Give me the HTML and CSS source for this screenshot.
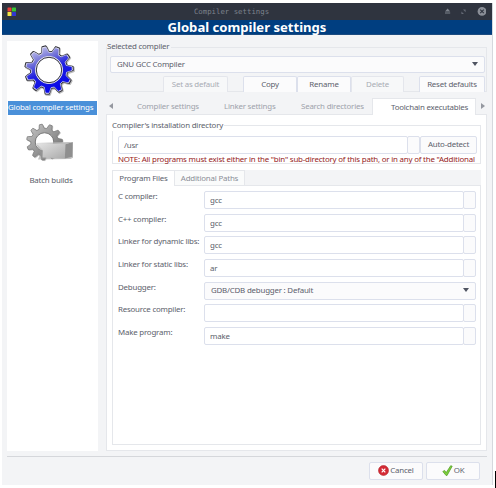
FILE: index.html
```html
<!DOCTYPE html>
<html lang="en">
<head>
<meta charset="utf-8">
<title>Compiler settings</title>
<link rel="stylesheet" href="styles.css">
</head>
<body>
<div class="window">
  <header class="titlebar">
    <svg class="app-icon" width="10" height="10" viewBox="0 0 10 10"><rect x=".5" y=".5" width="4" height="4" rx=".6" fill="#e8403a"/><rect x="5" y=".5" width="4" height="4" rx=".6" fill="#35c534"/><rect x=".5" y="5" width="4" height="4" rx=".6" fill="#f2e545"/><rect x="5" y="5" width="4" height="4" rx=".6" fill="#3236d0"/></svg>
    <span class="caption">Compiler settings</span>
    <svg class="controls" width="44" height="12" viewBox="0 0 44 12"><path d="M3 5.6 5.6 2.6 8.2 5.6ZM3 6.4h5.2v1.2H3Z" fill="#7f848e"/><path d="M21 3.6h2.6v2.6ZM19.4 5.4V8H22Z" fill="#666b76"/><circle cx="40" cy="5.4" r="4.4" fill="#8a8e97"/><path d="m38.2 3.6 3.6 3.6m0-3.6-3.6 3.6" stroke="#2f343f" stroke-width="1.1"/></svg>
  </header>
  <h1 class="banner">Global compiler settings</h1>
  <div class="body">
    <nav class="sidebar">
      <svg class="gear" width="56" height="56" viewBox="-28 -28 56 56">
        <defs>
          <linearGradient id="blue" x1="0" y1="0" x2=".45" y2="1"><stop offset="0" stop-color="#e2e2f4"/><stop offset=".35" stop-color="#7777d8"/><stop offset=".6" stop-color="#2020e0"/><stop offset="1" stop-color="#0808e8"/></linearGradient>
          <linearGradient id="gray" x1="0" y1="0" x2="1" y2="1"><stop offset="0" stop-color="#c9c9c9"/><stop offset="1" stop-color="#666"/></linearGradient>
          <linearGradient id="box" x1="0" y1="0" x2="1" y2="1"><stop offset="0" stop-color="#e6e6e6"/><stop offset="1" stop-color="#aaa"/></linearGradient>
        </defs>
        <path data-gear transform="translate(.8 .9)" fill="#aaa" stroke="#888" stroke-width="1.5" opacity=".55"/>
        <path data-gear fill="#dcdce4" stroke="#34343e" stroke-width="1.1"/>
        <path data-gear transform="scale(.955)" fill="url(#blue)" stroke="#e8e8f4" stroke-width=".6"/>
        <circle r="13.6" fill="#fff" stroke="#dedee8" stroke-width="1"/>
        <circle r="12.7" fill="#fff" stroke="#303040" stroke-width="1"/>
      </svg>
      <div class="nav-label selected">Global compiler settings</div>
      <svg class="batch" width="56" height="48" viewBox="0 0 56 48">
        <g transform="translate(22.5 22) scale(.74)">
          <path data-gear transform="translate(.8 .9)" fill="#ccc" stroke="#bbb"/>
          <path data-gear fill="url(#gray)" stroke="#777" stroke-width="1"/>
          <circle r="12.5" fill="#fff" stroke="#777" stroke-width="1.3"/>
        </g>
        <path d="M14.5 24.5 51 22.5v15.2L48.5 39 16 39.6 18.5 33Z" fill="#999" opacity=".6"/>
        <path d="M14 23 43.5 24.3 42.8 38.5 20.5 37.6 20.8 30Z" fill="url(#box)"/>
        <path d="m43.5 24.3 7.2-2.3-.4 14.8-7.5 1.7Z" fill="#8f8f8f"/>
        <path d="m14 23 36.7-1-7.2 2.3Z" fill="#bdbdbd"/>
      </svg>
      <div class="nav-label">Batch builds</div>
    </nav>
    <main class="main">
      <section class="group compiler">
        <div class="legend">Selected compiler</div>
        <div class="combo">GNU GCC Compiler<i class="arrow"></i></div>
        <div class="buttons">
          <span class="btn default off">Set as default</span><span class="btn copy">Copy</span><span class="btn rename">Rename</span><span class="btn delete off">Delete</span><span class="btn reset">Reset defaults</span>
        </div>
      </section>
      <div class="tabs">
        <i class="scroll left"></i>
        <span class="tab t1">Compiler settings</span><span class="tab t2">Linker settings</span><span class="tab t3">Search directories</span><span class="tab active">Toolchain executables</span>
        <i class="scroll right"></i>
      </div>
      <div class="page">
        <section class="group directory">
          <div class="legend">Compiler's installation directory</div>
          <div class="dir-row"><div class="field">/usr</div><span class="more"></span><span class="btn auto">Auto-detect</span></div>
          <div class="note">NOTE: All programs must exist either in the "bin" sub-directory of this path, or in any of the "Additional</div>
        </section>
        <section class="programs">
          <div class="subtabs"><span class="sub on">Program Files</span><span class="sub">Additional Paths</span></div>
          <div class="rows">
            <div class="row"><label>C compiler:</label><div class="field">gcc</div><span class="more"></span></div>
            <div class="row"><label>C++ compiler:</label><div class="field">gcc</div><span class="more"></span></div>
            <div class="row"><label>Linker for dynamic libs:</label><div class="field">gcc</div><span class="more"></span></div>
            <div class="row"><label>Linker for static libs:</label><div class="field">ar</div><span class="more"></span></div>
            <div class="row"><label>Debugger:</label><div class="combo">GDB/CDB debugger : Default<i class="arrow"></i></div></div>
            <div class="row"><label>Resource compiler:</label><div class="field"></div><span class="more"></span></div>
            <div class="row"><label>Make program:</label><div class="field">make</div><span class="more"></span></div>
          </div>
        </section>
      </div>
    </main>
  </div>
  <footer class="footer">
    <span class="btn action"><svg width="11" height="11" viewBox="0 0 11 11"><circle cx="5.5" cy="5.5" r="5" fill="#d42a35" stroke="#b52a30" stroke-width=".6"/><path d="m3.7 3.7 3.6 3.6m0-3.6L3.7 7.3" stroke="#fff" stroke-width="1.2"/></svg>Cancel</span>
    <span class="btn action ok"><svg width="11" height="11" viewBox="0 0 11 11"><path d="M.8 6.5 2.6 5.4 4.2 7.6 8.7.7l1.5.5-5.1 9.2H4Z" fill="#7ed03c" stroke="#4f9a22" stroke-width=".7"/></svg>OK</span>
  </footer>
</div>
<div class="cursor"></div>
<script src="gear.js"></script>
</body>
</html>
```
FILE: styles.css
```css
* { box-sizing: border-box; }
html, body { height: 100%; overflow: hidden; }
body {
  margin: 0;
  padding: 3px 0 0 2px;
  background: #fff;
  display: flex;
  font: 7.9px/11px "Noto Sans", "Open Sans", sans-serif;
  letter-spacing: -0.2px;
  color: #5c616c;
  white-space: nowrap;
}
.window {
  width: 491px;
  height: 482px;
  background: #f3f4f6;
  border-right: 1px solid #d5d8dd;
  display: flex;
  flex-direction: column;
}
.titlebar {
  height: 17px;
  background: #2f343f;
  display: flex;
  align-items: center;
  justify-content: space-between;
  padding: 0 6px 0 5px;
}
.app-icon { margin-right: 4px; }
.controls { flex: none; }
.caption { font: 7.35px/16px "DejaVu Sans Mono", monospace; letter-spacing: 0; color: #7d828c; }
.banner {
  margin: 0;
  height: 15px;
  background: #003e80;
  border-bottom: 1px solid #1c4b80;
  color: #fff;
  font-size: 13.1px;
  letter-spacing: 0;
  line-height: 14px;
  font-weight: 700;
  text-align: center;
}
.body {
  height: 421px;
  padding: 6px 5px 5px;
  display: flex;
  gap: 8px;
}
.sidebar {
  width: 91px;
  height: 410px;
  background: #fff;
  display: flex;
  flex-direction: column;
  align-items: center;
}
.gear { display: block; flex: none; margin: 1px 8px 0 0; }
.nav-label { height: 14px; line-height: 12px; margin-top: 4px; width: 89px; text-align: center; }
.nav-label.selected { background: #4a90d9; color: #fff; }
.gear + .nav-label { margin-top: 3px; text-align: left; }
.batch { display: block; margin: 5px 6px 0 0; flex: none; }
.batch + .nav-label { margin-top: 6px; padding-right: 3px; }
.main { width: 381px; }
.group { border: 1px solid #e5e7eb; }
.compiler { height: 45px; margin-top: 6px; padding: 0 1px 0 3px; overflow: visible; }
.legend { width: max-content; height: 11px; line-height: 10px; background: #f3f4f6; }
.compiler .legend { margin: -7px 0 0 -3px; padding-right: 2px; }
.combo, .field, .btn, .more {
  height: 18px;
  border: 1px solid #dce0ec;
  border-radius: 2px;
  background: #fbfbfc;
}
.combo {
  display: flex;
  justify-content: space-between;
  align-items: center;
  padding: 0 5px 1px 6px;
}
.compiler .combo { margin-top: 4px; height: 17px; padding-right: 6px; }
.arrow {
  border: 3.5px solid transparent;
  border-top: 4px solid #4f5461;
  border-bottom: 0;
}
.buttons { display: flex; margin-top: 3px; padding-left: 53px; }
.buttons .btn { height: 16px; border-bottom: 0; border-radius: 2px 2px 0 0; padding-bottom: 1px; }
.btn { display: flex; align-items: center; justify-content: center; }
.btn.off { color: #a8acb4; background: #f7f8f9; border-color: #e4e6ec; }
.default { width: 65px; }
.copy { width: 54px; margin-left: 15px; }
.rename { width: 54px; }
.delete { width: 53px; }
.reset { width: 66px; margin-left: 15px; }
.tabs { display: flex; height: 16px; margin-top: 6px; align-items: center; color: #9ea2ab; }
.scroll { border: 3.5px solid transparent; }
.scroll.left { border-left: 0; border-right: 4px solid #9598a0; margin-left: 3px; }
.scroll.right { border-right: 0; border-left: 4px solid #9598a0; margin-left: 5px; }
.tab { line-height: 16px; }
.t1 { width: 87px; margin-left: 24px; }
.t2 { width: 77px; }
.t3 { width: 71px; }
.active {
  width: 104px;
  height: 17px;
  background: #fff;
  border: 1px solid #e5e7eb;
  border-bottom: 0;
  color: #5c616c;
  padding-left: 18px;
  z-index: 1;
}
.page { height: 337px; background: #fff; border: 1px solid #e5e7eb; padding: 5px; }
.directory { height: 39px; margin-top: 5px; padding: 0 3px 0 5px; overflow: visible; }
.directory .legend { background: #fff; margin: -6px 0 0 -6px; padding-right: 1px; }
.dir-row { display: flex; margin-top: 5px; }
.dir-row .field { width: 290px; flex: none; }
.field { background: #fff; padding: 0 5px; line-height: 16px; }
.more { width: 13px; }
.dir-row .more { width: 13px; flex: none; margin-left: -1px; }
.auto { width: 57px; flex: none; padding-bottom: 1px; }
.note { color: #962222; line-height: 10px; height: 10px; }
.programs { height: 275px; margin-top: 6px; }
.subtabs { display: flex; height: 16px; background: #f3f4f6; border-bottom: 1px solid #e5e7eb; }
.sub {
  height: 16px;
  line-height: 14px;
  width: 70px;
  text-align: center;
  border: 1px solid #e5e7eb;
  border-left: 0;
  background: #fafbfb;
  color: #8b8f98;
}
.sub.on { width: 63px; background: #fff; border-left: 1px solid #e5e7eb; border-bottom: 0; color: #5c616c; }
.rows {
  height: 259px;
  border: 1px solid #e5e7eb;
  border-top: 0;
  padding: 5px 5px 0;
  display: grid;
  grid-auto-rows: 18px;
  row-gap: 4.7px;
  align-content: start;
}
.row { display: flex; }
.row label { width: 86px; line-height: 10px; }
.row .field { width: 260px; line-height: 16px; }
.row .combo { width: 272px; padding-right: 6px; }
.row .more { margin-left: -1px; }
.footer {
  height: 29px;
  margin: 0 5px;
  border-top: 1px solid #d5d7db;
  padding: 5px 7px 0 0;
  display: flex;
  justify-content: flex-end;
  gap: 3px;
}
.action { width: 54px; gap: 1px; padding-bottom: 1px; }
.cursor { width: 1px; height: 17px; margin: 468px 0 0 2px; background: #000; }
```
FILE: gear.js
```js
// Builds an eleven-tooth gear outline for every path marked data-gear.
const teeth = 11;
const profile = [[-11, 18.6], [-6.5, 22.5], [-4.5, 24.3], [4.5, 24.3], [6.5, 22.5], [11, 18.6]];
const points = [];
for (let i = 0; i < teeth; i++) {
  for (const [offset, radius] of profile) {
    const a = (-102 + i * 360 / teeth + offset) * Math.PI / 180;
    points.push((radius * Math.cos(a)).toFixed(2) + " " + (radius * Math.sin(a)).toFixed(2));
  }
}
for (const path of document.querySelectorAll("[data-gear]")) {
  path.setAttribute("d", "M" + points.join("L") + "Z");
  path.setAttribute("stroke-linejoin", "round");
}
```
